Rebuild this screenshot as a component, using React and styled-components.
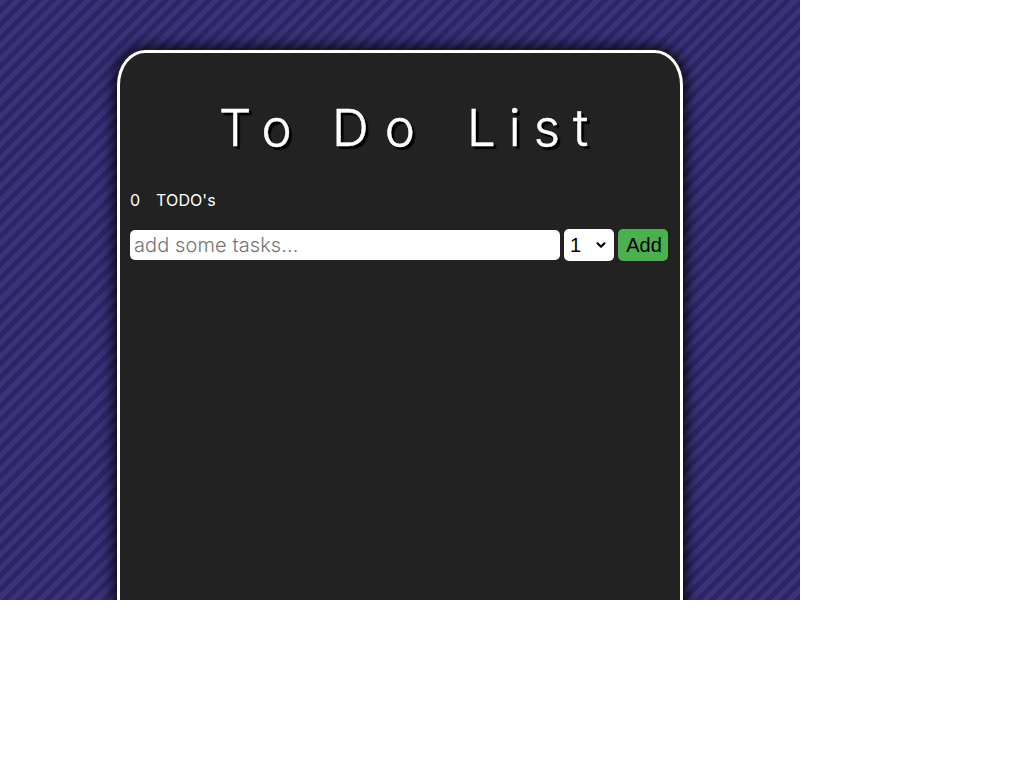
import React from "react";
import styled, { createGlobalStyle } from "styled-components";
import { ChevronDown } from "lucide-react";

const GlobalStyle = createGlobalStyle`
  * { box-sizing: border-box; }
  body { margin: 0; background: #fff; }
`;

const Page = styled.div`
  width: 800px;
  height: 600px;
  overflow: hidden;
  padding-top: 50px;
  background: repeating-linear-gradient(135deg, #3b327b 0 5px, #2c2664 5px 10px);
  font-family: Inter, "Liberation Sans", sans-serif;
`;

const Card = styled.main`
  width: 566px;
  height: 700px;
  margin: 0 auto;
  padding: 0 10px;
  border: 3px solid #fff;
  border-radius: 28px / 35px;
  background: #222;
  box-shadow: 0 0 15px 2px #000;
  color: #fff;
`;

const Title = styled.h1`
  display: flex;
  margin: 0;
  padding: 43px 0 0 89px;
  font-size: 51px;
  font-weight: 300;
  line-height: 64px;
  -webkit-text-stroke: 0.5px #fff;
  text-shadow: 2px 2px 1px #000, 3px 3px 1px #000;
`;

const Word = styled.span`
  width: ${(p) => p.$width}px;
  letter-spacing: ${(p) => p.$spacing}px;
  white-space: nowrap;
`;

const Counter = styled.div`
  display: flex;
  gap: 16px;
  margin-top: 30px;
  height: 20px;
  font-size: 16px;
  line-height: 20px;
`;

const Label = styled.span`
  letter-spacing: 0.1px;
`;

const Form = styled.form`
  display: flex;
  align-items: center;
  gap: 4px;
  margin-top: 19px;
`;

const TaskInput = styled.input`
  width: 430px;
  height: 30px;
  padding: 0 4px;
  border: 0;
  border-radius: 5px;
  font: 300 20px Inter, sans-serif;
  letter-spacing: 0.1px;
  &::placeholder { color: #757575; }
`;

const Count = styled.div`
  display: flex;
  align-items: center;
  justify-content: space-between;
  width: 50px;
  height: 32px;
  padding: 0 6px;
  border-radius: 5px;
  background: #fff;
  color: #000;
  font: 20px "Liberation Sans", sans-serif;
`;

const AddButton = styled.button`
  width: 50px;
  height: 32px;
  padding: 0 0 0 2px;
  border: 0;
  border-radius: 5px;
  background: #4caf50;
  color: #000;
  font: 20px "Liberation Sans", sans-serif;
`;

export default function App() {
  return (
    <>
      <GlobalStyle />
      <Page>
        <Card>
          <Title>
            <Word $width={113} $spacing={14}>To</Word>
            <Word $width={135} $spacing={16}>Do</Word>
            <Word $width={140} $spacing={13}>List</Word>
          </Title>
          <Counter>
            <span>0</span>
            <Label>TODO's</Label>
          </Counter>
          <Form>
            <TaskInput placeholder="add some tasks..." />
            <Count>
              1
              <ChevronDown size={14} strokeWidth={3.6} />
            </Count>
            <AddButton type="button">Add</AddButton>
          </Form>
        </Card>
      </Page>
    </>
  );
}
